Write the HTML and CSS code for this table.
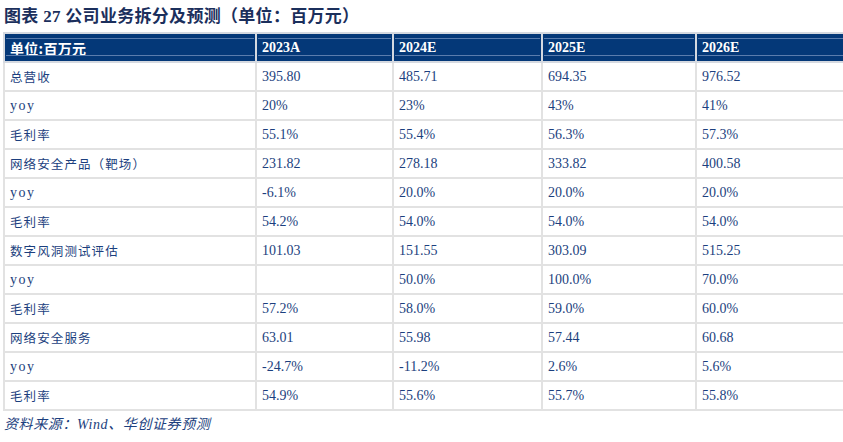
FILE: index.html
```html
<!DOCTYPE html>
<html lang="zh">
<head>
<meta charset="utf-8">
<link rel="stylesheet" href="styles.css">
</head>
<body>
<div class="page">
  <h1 class="title">图表 27 公司业务拆分及预测（单位：百万元）</h1>
  <table class="fin">
    <colgroup>
      <col class="c1"><col class="c2"><col class="c3"><col class="c4"><col class="c5">
    </colgroup>
    <thead>
      <tr>
        <th class="cn">单位:百万元</th><th>2023A</th><th>2024E</th><th>2025E</th><th>2026E</th>
      </tr>
    </thead>
    <tbody>
      <tr><td class="cn">总营收</td><td>395.80</td><td>485.71</td><td>694.35</td><td>976.52</td></tr>
      <tr><td class="lat">yoy</td><td>20%</td><td>23%</td><td>43%</td><td>41%</td></tr>
      <tr><td class="cn">毛利率</td><td>55.1%</td><td>55.4%</td><td>56.3%</td><td>57.3%</td></tr>
      <tr><td class="cn">网络安全产品（靶场）</td><td>231.82</td><td>278.18</td><td>333.82</td><td>400.58</td></tr>
      <tr><td class="lat">yoy</td><td>-6.1%</td><td>20.0%</td><td>20.0%</td><td>20.0%</td></tr>
      <tr><td class="cn">毛利率</td><td>54.2%</td><td>54.0%</td><td>54.0%</td><td>54.0%</td></tr>
      <tr><td class="cn">数字风洞测试评估</td><td>101.03</td><td>151.55</td><td>303.09</td><td>515.25</td></tr>
      <tr><td class="lat">yoy</td><td></td><td>50.0%</td><td>100.0%</td><td>70.0%</td></tr>
      <tr><td class="cn">毛利率</td><td>57.2%</td><td>58.0%</td><td>59.0%</td><td>60.0%</td></tr>
      <tr><td class="cn">网络安全服务</td><td>63.01</td><td>55.98</td><td>57.44</td><td>60.68</td></tr>
      <tr><td class="lat">yoy</td><td>-24.7%</td><td>-11.2%</td><td>2.6%</td><td>5.6%</td></tr>
      <tr><td class="cn">毛利率</td><td>54.9%</td><td>55.6%</td><td>55.7%</td><td>55.8%</td></tr>
    </tbody>
  </table>
  <p class="source">资料来源：Wind、华创证券预测</p>
</div>
</body>
</html>
```

FILE: styles.css
```css
html, body {
  margin: 0;
  padding: 0;
  background: #ffffff;
  overflow: hidden;
}

.page {
  width: 843px;
  height: 442px;
  padding: 0 0 0 3px;
  box-sizing: border-box;
}

.title {
  margin: 0;
  padding: 5px 0 0 1px;
  height: 32px;
  box-sizing: border-box;
  font-family: "Liberation Serif", "Noto Sans CJK SC", serif;
  font-size: 17px;
  line-height: 24px;
  font-weight: bold;
  color: #1b2f5c;
  letter-spacing: 0.3px;
  white-space: nowrap;
}

.fin {
  border-collapse: collapse;
  table-layout: fixed;
  width: 842px;
  font-family: "Liberation Serif", "Noto Sans CJK SC", serif;
  font-size: 14px;
  color: #1c3f7e;
}

.c1 { width: 252px; }
.c2 { width: 137px; }
.c3 { width: 149px; }
.c4 { width: 154px; }
.c5 { width: 150px; }

.fin th,
.fin td {
  border: 2px solid #e2e2e2;
  padding: 0 5px;
  text-align: left;
  white-space: nowrap;
  overflow: hidden;
}

.fin th {
  position: relative;
  height: 27px;
  background: #043878;
  color: #ffffff;
  font-weight: bold;
  font-size: 14px;
  border-color: #d5d9e0;
}

.fin th::before {
  content: "";
  position: absolute;
  left: 1px;
  right: 1px;
  top: 4px;
  bottom: 5px;
  border-top: 1px solid #5a7cad;
  border-bottom: 1px solid #5a7cad;
}

.fin th.cn {
  font-family: "Noto Sans CJK SC", sans-serif;
  font-size: 14px;
  letter-spacing: 0.3px;
}

.fin td {
  height: 27px;
}

.fin td.cn {
  font-family: "Noto Sans CJK SC", sans-serif;
  font-size: 12.5px;
  letter-spacing: 1.1px;
  font-weight: 400;
}

.fin td.lat {
  font-family: "Liberation Serif", serif;
  font-size: 14px;
  letter-spacing: 1.5px;
}

.source {
  margin: 5px 0 0 1px;
  font-family: "Liberation Serif", "Noto Sans CJK SC", serif;
  font-style: italic;
  font-size: 14px;
  line-height: 18px;
  color: #1c3f7e;
  letter-spacing: 0.6px;
}
```
